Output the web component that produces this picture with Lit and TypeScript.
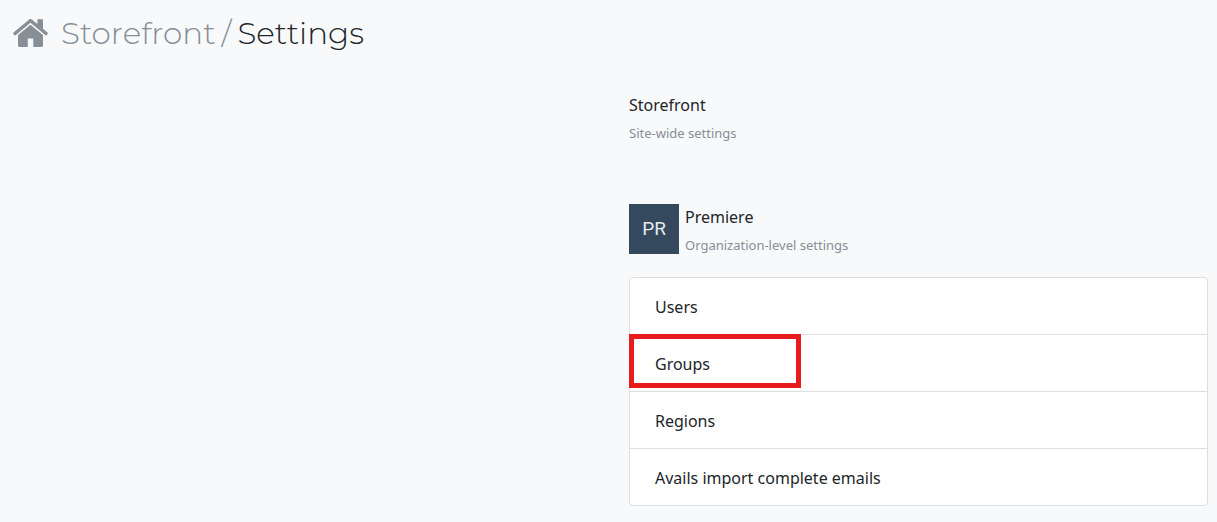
import { LitElement, html, css } from "lit";
import { customElement, state } from "lit/decorators.js";
import { classMap } from "lit/directives/class-map.js";

interface SettingsLink {
  label: string;
  highlighted?: boolean;
}

@customElement("app-root")
export class AppRoot extends LitElement {
  static styles = css`
    :host {
      display: block;
      box-sizing: border-box;
      min-height: 100vh;
      padding: 12px 9px 15px;
      background: #f8f9fb;
      color: #212529;
      font-family: "Segoe UI", "Noto Sans", "Open Sans", sans-serif;
      font-size: 16px;
      line-height: 24px;
    }
    a {
      color: inherit;
      text-decoration: none;
    }
    h1,
    h2,
    p,
    ul {
      margin: 0;
      padding: 0;
      font-weight: 400;
    }
    .title {
      display: flex;
      align-items: center;
      padding-left: 4px;
      font-family: Montserrat, Inter, sans-serif;
      font-size: 31px;
      font-weight: 300;
      line-height: 42px;
    }
    .crumb {
      color: #868e96;
    }
    .home {
      display: flex;
      margin-right: 13px;
    }
    .home svg {
      width: 35px;
      height: 28px;
      fill: currentColor;
    }
    .slash {
      margin: 0 6px;
    }
    .columns {
      display: grid;
      grid-template-columns: 1fr 1fr;
      gap: 41px;
      padding-top: 38px;
    }
    .panel {
      grid-column: 2;
    }
    .section {
      display: flex;
      gap: 6px;
      margin-bottom: 57px;
    }
    .organization {
      margin-bottom: 18px;
    }
    h2 {
      font-size: 16px;
      line-height: 27px;
    }
    .note {
      color: #868e96;
      font-size: 13px;
      line-height: 28px;
    }
    .badge {
      display: grid;
      place-items: center;
      width: 50px;
      height: 50px;
      background: #34495e;
      color: #e6e9ec;
      font-family: Roboto, sans-serif;
      font-size: 19px;
    }
    .list {
      list-style: none;
      background: #fff;
      border: 1px solid #dcdedf;
      border-radius: 4px;
    }
    .item {
      position: relative;
    }
    .item + .item {
      border-top: 1px solid #dcdedf;
    }
    .item a {
      display: block;
      padding: 17px 25px 15px;
    }
    .highlighted::after {
      content: "";
      position: absolute;
      top: -1px;
      left: -1px;
      box-sizing: border-box;
      width: 172px;
      height: 54px;
      border: 5px solid #e81c1c;
      pointer-events: none;
    }
  `;

  @state()
  private links: SettingsLink[] = [
    { label: "Users" },
    { label: "Groups", highlighted: true },
    { label: "Regions" },
    { label: "Avails import complete emails" },
  ];

  render() {
    return html`
      <h1 class="title">
        <a class="crumb home" href="#home" aria-label="Home">
          <svg viewBox="88 253 1616 1283" aria-hidden="true">
            <path
              d="M1472 992v480q0 26-19 45t-45 19h-384v-384h-256v384h-384q-26 0-45-19t-19-45v-480q0-1 .5-3t.5-3l575-474 575 474q1 2 1 6zm223-69l-62 74q-8 9-21 11h-3q-13 0-21-7l-692-577-692 577q-12 8-24 7-13-2-21-11l-62-74q-8-10-7-23.5t11-21.5l719-599q32-26 76-26t76 26l244 204v-195q0-14 9-23t23-9h192q14 0 23 9t9 23v408l219 182q10 8 11 21.5t-7 23.5z"
            />
          </svg>
        </a>
        <a class="crumb" href="#storefront">Storefront</a>
        <span class="crumb slash">/</span>
        <span>Settings</span>
      </h1>
      <main class="columns">
        <div class="panel">
          <section class="section">
            <div>
              <h2>Storefront</h2>
              <p class="note">Site-wide settings</p>
            </div>
          </section>
          <section class="section organization">
            <div class="badge" aria-hidden="true">PR</div>
            <div>
              <h2>Premiere</h2>
              <p class="note">Organization-level settings</p>
            </div>
          </section>
          <ul class="list">
            ${this.links.map(
              (link) => html`
                <li class=${classMap({ item: true, highlighted: !!link.highlighted })}>
                  <a href="#${link.label.toLowerCase().replace(/ /g, "-")}">${link.label}</a>
                </li>
              `
            )}
          </ul>
        </div>
      </main>
    `;
  }
}
